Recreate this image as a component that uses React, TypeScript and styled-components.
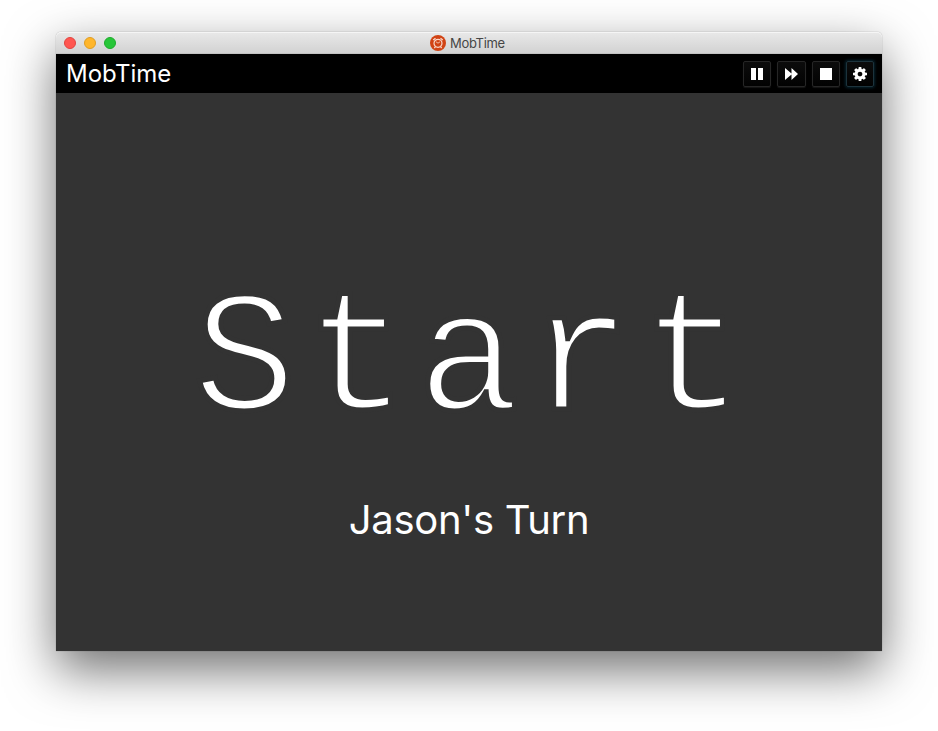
import React from "react";
import styled, { createGlobalStyle } from "styled-components";

const GlobalStyle = createGlobalStyle`
  * { box-sizing: border-box; }
  html, body { margin: 0; background: #fff; overflow: hidden; }
`;

const Desktop = styled.main`
  width: 938px;
  height: 731px;
  padding: 32px 56px 80px;
  background: #fff;
  font-family: Inter, "Liberation Sans", sans-serif;
`;

const Window = styled.section`
  display: flex;
  flex-direction: column;
  height: 619px;
  border-radius: 5px 5px 0 0;
  box-shadow: 0 0 1px rgba(0, 0, 0, 0.55), 0 19px 50px rgba(0, 0, 0, 0.56);
`;

const TitleBar = styled.header`
  display: grid;
  grid-template-columns: 1fr auto 1fr;
  align-items: center;
  height: 22px;
  padding: 0 8px;
  border-radius: 5px 5px 0 0;
  background: linear-gradient(#e9e9e9, #d1d1d1);
  box-shadow: inset 0 1px #f5f5f5, inset 0 -1px #c3c3c3;
`;

const Lights = styled.div`
  display: flex;
  gap: 8px;
`;

const Light = styled.span<{ $fill: string; $edge: string }>`
  width: 12px;
  height: 12px;
  border-radius: 50%;
  background: ${(p) => p.$fill};
  border: 1px solid ${(p) => p.$edge};
`;

const Caption = styled.div`
  display: flex;
  align-items: center;
  gap: 4px;
  width: 78px;
  font-size: 13px;
  line-height: 22px;
  color: #464646;
  letter-spacing: -0.3px;
`;

const Toolbar = styled.div`
  display: flex;
  align-items: center;
  justify-content: space-between;
  height: 39px;
  padding: 0 8px 0 10px;
  background: #000;
`;

const Brand = styled.h1`
  margin: 0;
  font-size: 24px;
  font-weight: 400;
  line-height: 39px;
  color: #fff;
`;

const Controls = styled.div`
  display: flex;
  gap: 6px;
`;

const ControlButton = styled.button<{ $active?: boolean; $wide?: boolean }>`
  display: flex;
  align-items: center;
  justify-content: center;
  width: ${(p) => (p.$wide ? 29 : 28)}px;
  height: 26px;
  padding: 0;
  color: #fff;
  background: linear-gradient(#0c0c0c, #020202);
  border: 1px solid ${(p) => (p.$active ? "#1d333c" : "#262626")};
  border-radius: 2px;
  box-shadow: ${(p) => (p.$active ? "0 0 3px 1px #06222e" : "0 1px 1px #161616")};
`;

const Stage = styled.div`
  display: flex;
  flex-direction: column;
  align-items: center;
  height: 558px;
  padding-top: 171px;
  background: #333;
  color: #fff;
`;

const Clock = styled.div`
  padding-left: 8px;
  font-family: "Liberation Mono", monospace;
  font-size: 172px;
  line-height: 200px;
  letter-spacing: 8.8px;
  -webkit-text-stroke: 5px #333;
`;

const Turn = styled.div`
  margin-top: 32px;
  font-size: 40px;
  line-height: 48px;
  letter-spacing: -0.3px;
`;

const Icon = styled.svg`
  display: block;
  flex: none;
  fill: currentColor;
`;

const COG =
  "M1152 896q0-106-75-181t-181-75-181 75-75 181 75 181 181 75 181-75 75-181zm512-109v222q0 12-8 23t-20 13l-185 28q-19 54-39 91 35 50 107 138 10 12 10 25t-9 23q-27 37-99 108t-94 71q-12 0-26-9l-138-108q-44 23-91 38-16 136-29 186-7 28-36 28h-222q-14 0-24.5-8.5t-11.5-21.5l-28-184q-49-16-90-37l-141 107q-10 9-25 9-14 0-25-11-126-114-165-168-7-10-7-23 0-12 8-23 15-21 51-66.5t54-70.5q-27-50-41-99l-183-27q-13-2-21-12.5t-8-23.5v-222q0-12 8-23t19-13l186-28q14-46 39-92-40-57-107-138-10-12-10-24 0-10 9-23 26-36 98.500-107.500t94.500-71.500q13 0 26 10l138 107q44-23 91-38 16-136 29-186 7-28 36-28h222q14 0 24.500 8.500t11.500 21.500l28 184q49 16 90 37l142-107q9-9 24-9 13 0 25 10 129 119 165 170 7 8 7 22 0 12-8 23-15 21-51 66.500t-54 70.500q26 50 41 98l183 28q13 2 21 12.500t8 23.500z";

function AlarmClock() {
  return (
    <Icon width="16" height="16" viewBox="0 0 16 16">
      <circle cx="8" cy="8" r="8" fill="#d14314" />
      <g fill="none" stroke="#f8d9cd">
        <circle cx="8" cy="8.3" r="4" strokeWidth="1.2" />
        <path d="M3.200 4.900 5.500 3.200M12.800 4.900 10.500 3.200M5.300 11.800 4.400 13.200M10.700 11.800 11.600 13.200" strokeWidth="1.300" />
        <path d="M6 6.800 8 8.200 10 6.800" strokeWidth="0.800" />
      </g>
    </Icon>
  );
}

export default function App() {
  return (
    <Desktop>
      <GlobalStyle />
      <Window>
        <TitleBar>
          <Lights>
            <Light $fill="#ff5650" $edge="#e2443f" />
            <Light $fill="#ffb62b" $edge="#e09d22" />
            <Light $fill="#27c639" $edge="#1dac2b" />
          </Lights>
          <Caption>
            <AlarmClock />
            MobTime
          </Caption>
        </TitleBar>
        <Toolbar>
          <Brand>MobTime</Brand>
          <Controls>
            <ControlButton aria-label="Pause">
              <Icon width="12" height="12" viewBox="0 0 12 12">
                <path d="M0 0h5v12H0zM7 0h5v12H7z" />
              </Icon>
            </ControlButton>
            <ControlButton aria-label="Skip" $wide>
              <Icon width="13" height="12" viewBox="0 0 13 12">
                <path d="M0 0 6.500 5.500V0L13 6 6.500 12V6.500L0 12z" />
              </Icon>
            </ControlButton>
            <ControlButton aria-label="Stop">
              <Icon width="12" height="12" viewBox="0 0 12 12">
                <path d="M0 0h12v12H0z" />
              </Icon>
            </ControlButton>
            <ControlButton aria-label="Settings" $active>
              <Icon width="14" height="14" viewBox="128 128 1536 1536">
                <path d={COG} />
              </Icon>
            </ControlButton>
          </Controls>
        </Toolbar>
        <Stage>
          <Clock>Start</Clock>
          <Turn>Jason's Turn</Turn>
        </Stage>
      </Window>
    </Desktop>
  );
}
